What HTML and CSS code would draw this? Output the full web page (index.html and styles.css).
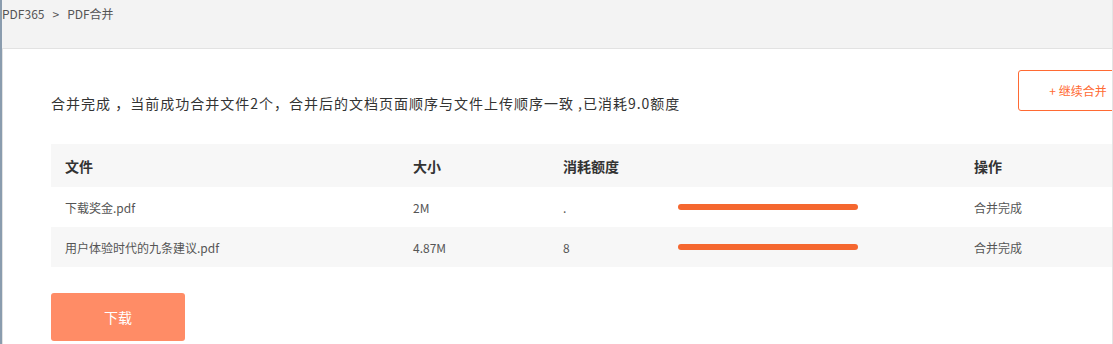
FILE: index.html
```html
<!DOCTYPE html>
<html lang="zh-CN">
<head>
    <meta charset="UTF-8">
    <meta name="viewport" content="width=device-width, initial-scale=1.0">
    <title>PDF合并</title>
    <link rel="stylesheet" href="styles.css">
</head>
<body>
    <div class="page">
        <div class="crumb">
            <span>PDF365</span>
            <span class="sep">&gt;</span>
            <span>PDF合并</span>
        </div>

        <div class="panel">
            <div class="top">
                <p class="msg">合并完成 ，当前成功合并文件2个，合并后的文档页面顺序与文件上传顺序一致 ,已消耗9.0额度</p>
                <button class="more">+ 继续合并</button>
            </div>

            <div class="table">
                <div class="row head">
                    <div>文件</div>
                    <div>大小</div>
                    <div>消耗额度</div>
                    <div></div>
                    <div>操作</div>
                </div>
                <div class="row">
                    <div>下载奖金.pdf</div>
                    <div>2M</div>
                    <div>.</div>
                    <div><span class="bar"></span></div>
                    <div>合并完成</div>
                </div>
                <div class="row alt">
                    <div>用户体验时代的九条建议.pdf</div>
                    <div>4.87M</div>
                    <div>8</div>
                    <div><span class="bar"></span></div>
                    <div>合并完成</div>
                </div>
            </div>

            <button class="download">下载</button>
        </div>
    </div>
</body>
</html>
```

FILE: styles.css
```css
body {
    margin: 0;
    padding: 0;
    font-family: "Noto Sans CJK SC", "Liberation Sans", sans-serif;
    background-color: #fff;
}

.page {
    width: 1110px;
    height: 344px;
    border-left: 2px solid #8a9cae;
    border-right: 1px solid #e4e4e4;
    background-color: #f3f3f3;
    overflow: hidden;
}

.crumb {
    height: 48px;
    display: flex;
    align-items: flex-start;
    gap: 8px;
    padding-top: 4px;
    box-sizing: border-box;
    font-size: 12px;
    line-height: 20px;
    color: #555;
}

.panel {
    background-color: #fff;
    border-top: 1px solid #e2e2e2;
    border-left: 1px solid #e2e2e2;
    padding-left: 48px;
    height: 300px;
    overflow: hidden;
}

.top {
    display: flex;
    justify-content: space-between;
    align-items: flex-start;
}

.msg {
    margin: 44px 0 0 0;
    font-size: 14px;
    line-height: 20px;
    letter-spacing: 1px;
    color: #333;
    white-space: nowrap;
}

.more {
    margin-top: 21px;
    margin-right: -30px;
    width: 124px;
    height: 41px;
    flex: none;
    background-color: #fff;
    border: 1px solid #ff6a33;
    border-radius: 3px;
    color: #ff6a33;
    font-family: inherit;
    font-size: 12px;
    padding: 0 4px 0 0;
}

.table {
    margin-top: 31px;
    width: 1120px;
}

.row {
    display: grid;
    grid-template-columns: 348px 150px 115px 296px 1fr;
    height: 40px;
    align-items: center;
    font-size: 12px;
    color: #555;
}

.row > div {
    padding-left: 14px;
}

.row.head {
    height: 43px;
    background-color: #f7f7f7;
    font-size: 14px;
    font-weight: bold;
    color: #333;
}

.row.alt {
    background-color: #f7f7f7;
}

.bar {
    display: block;
    width: 180px;
    height: 6px;
    border-radius: 3px;
    background-color: #f5672f;
}

.download {
    margin-top: 26px;
    width: 134px;
    height: 48px;
    background-color: #ff8c66;
    border: none;
    border-radius: 3px;
    color: #fff;
    font-family: inherit;
    font-size: 14px;
    padding: 0;
}
```
